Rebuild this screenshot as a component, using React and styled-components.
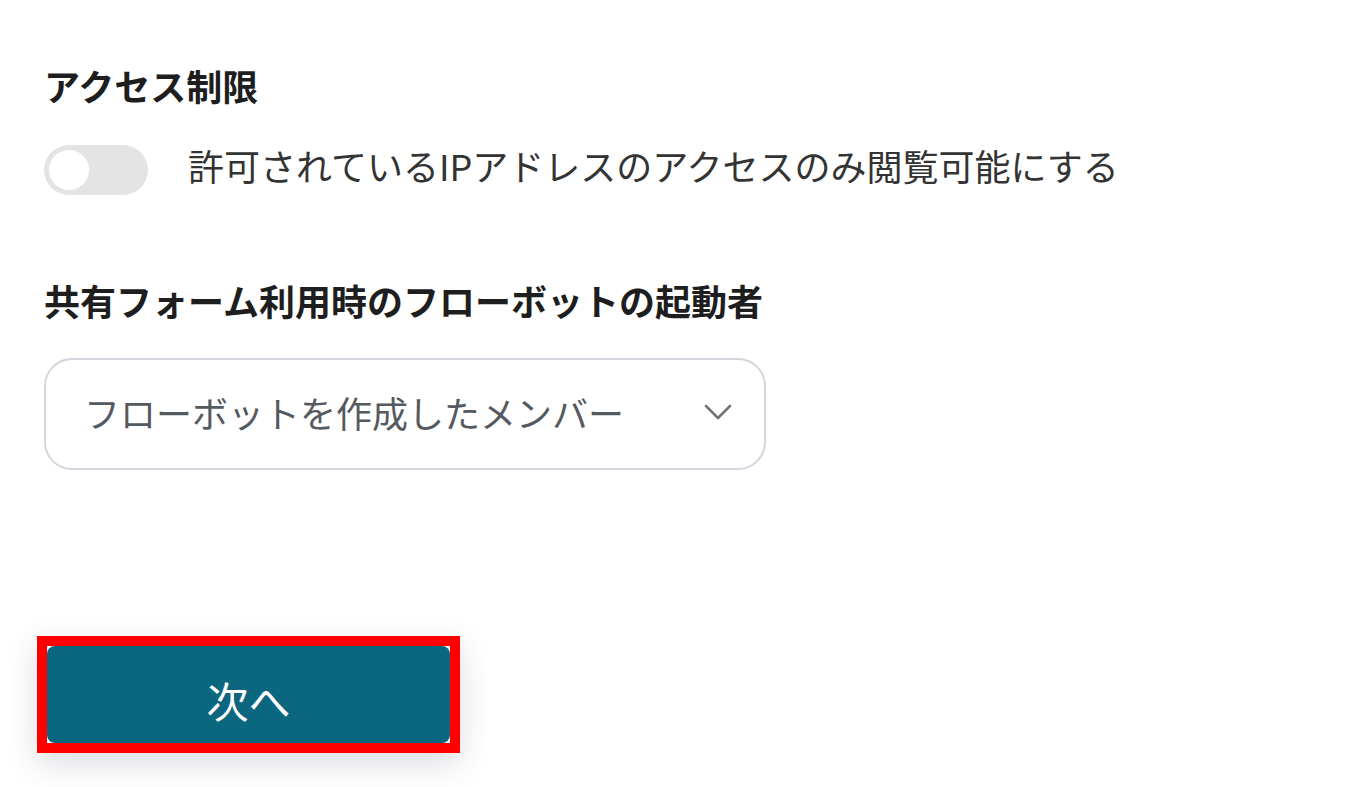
import styled, { createGlobalStyle } from 'styled-components';

const GlobalStyle = createGlobalStyle`
  body {
    margin: 0;
    background: #ffffff;
    font-family: "Noto Sans CJK JP", "Noto Sans", sans-serif;
    color: #222222;
  }
`;

const Page = styled.div`
  padding: 61px 0 40px 44px;
  display: flex;
  flex-direction: column;
`;

const Heading = styled.h2`
  margin: 0;
  font-size: 36px;
  font-weight: 700;
  line-height: 48px;
  color: #1e1e1e;
`;

const ToggleRow = styled.label`
  display: flex;
  align-items: center;
  gap: 40px;
  margin-top: 32px;
`;

const Track = styled.span`
  width: 104px;
  height: 50px;
  border-radius: 25px;
  background: ${p => (p.$on ? '#0b6680' : '#e4e4e4')};
  display: flex;
  align-items: center;
  padding: 0 5px;
  box-sizing: border-box;
  justify-content: ${p => (p.$on ? 'flex-end' : 'flex-start')};
`;

const Knob = styled.span`
  width: 40px;
  height: 40px;
  border-radius: 50%;
  background: #ffffff;
`;

const ToggleText = styled.span`
  font-size: 36px;
  color: #333333;
  line-height: 48px;
  margin-bottom: 10px;
`;

const Section = styled.div`
  margin-top: ${p => p.$top}px;
  display: flex;
  flex-direction: column;
`;

const Select = styled.div`
  margin-top: 34px;
  width: 722px;
  height: 112px;
  box-sizing: border-box;
  border: 2px solid #d3d7dd;
  border-radius: 28px;
  display: flex;
  align-items: center;
  justify-content: space-between;
  padding: 0 31px 4px 38px;
`;

const SelectValue = styled.span`
  font-size: 36px;
  color: #555a60;
`;

const Chevron = styled.svg`
  width: 30px;
  height: 18px;
`;

const Footer = styled.div`
  margin-top: 166px;
  margin-left: -7px;
`;

const Highlight = styled.div`
  display: inline-block;
  border: 10px solid #ff0000;
  box-shadow: 0 10px 30px rgba(30, 40, 60, 0.16);
`;

const NextButton = styled.button`
  display: block;
  width: 403px;
  height: 97px;
  border: none;
  border-radius: 8px;
  background: #0b6680;
  color: #ffffff;
  font-family: inherit;
  font-size: 42px;
  padding-top: 10px;
  cursor: pointer;
`;

export default function App() {
  return (
    <>
      <GlobalStyle />
      <Page>
        <Heading>アクセス制限</Heading>
        <ToggleRow>
          <Track>
            <Knob />
          </Track>
          <ToggleText>許可されているIPアドレスのアクセスのみ閲覧可能にする</ToggleText>
        </ToggleRow>
        <Section $top={77}>
          <Heading>共有フォーム利用時のフローボットの起動者</Heading>
          <Select>
            <SelectValue>フローボットを作成したメンバー</SelectValue>
            <Chevron viewBox="0 0 30 18" fill="none">
              <path d="M3 3l12 12L27 3" stroke="#70757a" strokeWidth="2.6" strokeLinecap="round" strokeLinejoin="round" />
            </Chevron>
          </Select>
        </Section>
        <Footer>
          <Highlight>
            <NextButton>次へ</NextButton>
          </Highlight>
        </Footer>
      </Page>
    </>
  );
}
